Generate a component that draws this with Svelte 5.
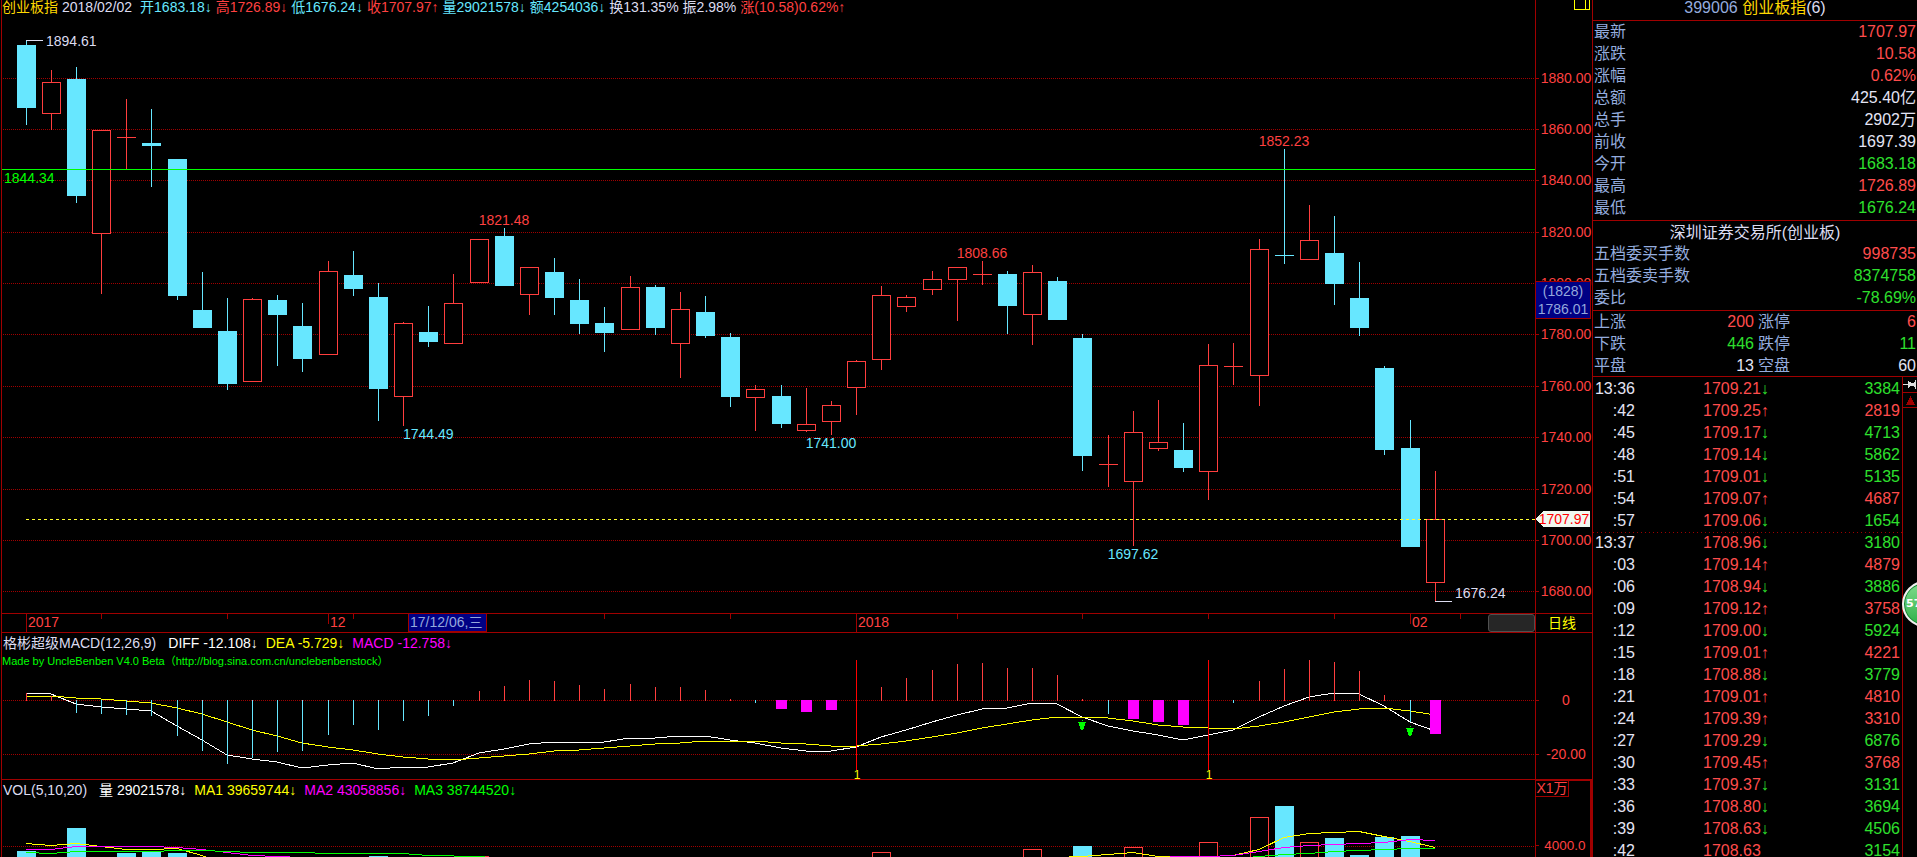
<script lang="ts">
	type Tone = 'up' | 'down' | 'plain';

	// first drawn column of the plots, right after the frame line
	const left = 2;
	let plotWidth = $state(1533);
	let step = $derived((plotWidth + left) / 61);
	let right = $derived(plotWidth + left);
	let cx = $derived((i: number) => Math.floor(26.1 + i * step));

	const header: [string, string][] = [
		['gold', '创业板指'],
		['pale date', '2018/02/02'],
		['cyan', '开1683.18↓'],
		['red', '高1726.89↓'],
		['cyan', '低1676.24↓'],
		['red', '收1707.97↑'],
		['cyan', '量29021578↓'],
		['cyan', '额4254036↓'],
		['pale', '换131.35%'],
		['pale', '振2.98%'],
		['red', '涨(10.58)0.62%↑']
	];

	const grid: [number, string][] = [
		[78, '1880.00'],
		[129, '1860.00'],
		[180, '1840.00'],
		[232, '1820.00'],
		[283, '1800.00'],
		[334, '1780.00'],
		[386, '1760.00'],
		[437, '1740.00'],
		[489, '1720.00'],
		[540, '1700.00'],
		[591, '1680.00']
	];

	// rising?, high, body top, body bottom, low
	const candles = [
		[0, 40, 45, 108, 125],
		[1, 70, 82, 114, 130],
		[0, 67, 79, 196, 203],
		[1, 130, 130, 234, 294],
		[1, 99, 137, 138, 169],
		[0, 109, 143, 146, 187],
		[0, 159, 159, 296, 300],
		[0, 272, 310, 328, 328],
		[0, 298, 331, 384, 390],
		[1, 298, 299, 382, 382],
		[0, 295, 300, 315, 366],
		[0, 303, 326, 359, 372],
		[1, 261, 271, 355, 355],
		[0, 251, 275, 289, 296],
		[0, 283, 297, 389, 421],
		[1, 322, 323, 397, 426],
		[0, 306, 332, 342, 347],
		[1, 274, 303, 344, 344],
		[1, 239, 239, 283, 283],
		[0, 228, 236, 286, 286],
		[1, 267, 267, 295, 315],
		[0, 258, 272, 298, 315],
		[0, 279, 300, 324, 334],
		[0, 307, 323, 333, 352],
		[1, 276, 287, 330, 330],
		[0, 285, 287, 328, 335],
		[1, 292, 309, 344, 378],
		[0, 296, 312, 336, 338],
		[0, 333, 337, 397, 407],
		[1, 385, 389, 398, 431],
		[0, 385, 396, 424, 428],
		[1, 388, 424, 431, 432],
		[1, 401, 405, 422, 435],
		[1, 360, 361, 388, 415],
		[1, 286, 295, 360, 370],
		[1, 295, 297, 307, 312],
		[1, 271, 279, 290, 295],
		[1, 267, 267, 280, 321],
		[1, 261, 274, 275, 285],
		[0, 271, 274, 306, 334],
		[1, 265, 272, 315, 345],
		[0, 277, 281, 320, 320],
		[0, 334, 338, 456, 471],
		[1, 435, 464, 465, 487],
		[1, 411, 432, 482, 546],
		[1, 400, 442, 449, 451],
		[0, 423, 450, 468, 472],
		[1, 344, 365, 472, 500],
		[1, 343, 366, 367, 385],
		[1, 239, 249, 376, 406],
		[0, 149, 255, 256, 264],
		[1, 205, 240, 260, 260],
		[0, 216, 253, 284, 305],
		[0, 262, 298, 328, 336],
		[0, 366, 368, 450, 455],
		[0, 420, 448, 547, 547],
		[1, 471, 519, 583, 601]
	];

	const marks: [number, number, number, string, string, string][] = [
		[0, 20, 46, 'start', 'pale', '1894.61'],
		[19, 0, 225, 'middle', 'red', '1821.48'],
		[15, 0, 439, 'start', 'cyan', '1744.49'],
		[32, 0, 448, 'middle', 'cyan', '1741.00'],
		[38, 0, 258, 'middle', 'red', '1808.66'],
		[50, 0, 146, 'middle', 'red', '1852.23'],
		[44, 0, 559, 'middle', 'cyan', '1697.62'],
		[56, 20, 598, 'start', 'pale', '1676.24']
	];

	const dayTicks = [3, 8, 13, 23, 28, 37, 42, 47, 52, 57];
	const monthTicks: [number, number, string][] = [
		[0, 18, '2017'],
		[12, 10, '12'],
		[33, 18, '2018'],
		[55, 10, '02']
	];

	const histogram = [
		693, 696, 713, 714, 715, 716, 736, 751, 764, 758, 752, 751, 735, 725, 730, 721, 716, 706, 691,
		686, 680, 681, 685, 689, 684, 687, 687, 690, 699, 703, 709, 712, 710, 700, 687, 678, 670, 664,
		663, 668, 668, 675, 699, 714, 719, 722, 725, 700, 703, 681, 669, 660, 662, 671, 695, 722, 734
	];
	const thick = [30, 31, 32, 44, 45, 46, 56];
	const crossings = [33, 47];
	const sellSignals: [number, number][] = [
		[42, 722],
		[55, 728]
	];

	const diff = [
		693, 694, 704, 707, 709, 711, 726, 740, 755, 759, 762, 768, 765, 763, 769, 767, 767, 763, 753,
		749, 744, 742, 742, 742, 738, 738, 736, 736, 740, 743, 748, 751, 751, 747, 737, 730, 722, 715,
		709, 708, 703, 704, 717, 726, 731, 735, 740, 735, 730, 717, 706, 697, 693, 694, 706, 722, 731
	];
	const dea = [
		696, 696, 698, 699, 701, 703, 708, 714, 722, 730, 736, 743, 747, 750, 754, 757, 759, 760, 758,
		756, 754, 751, 750, 748, 746, 744, 743, 741, 741, 741, 743, 744, 746, 746, 744, 741, 737, 733,
		728, 724, 720, 717, 717, 718, 721, 725, 727, 728, 729, 726, 722, 717, 712, 709, 708, 711, 715
	];

	// column, rising?, top
	const volumes = [
		[0, 0, 851],
		[2, 0, 828],
		[4, 0, 853],
		[5, 0, 851],
		[6, 0, 853],
		[14, 0, 856],
		[18, 1, 856],
		[34, 1, 852],
		[40, 1, 849],
		[42, 0, 846],
		[44, 1, 847],
		[47, 1, 842],
		[49, 1, 817],
		[50, 0, 806],
		[51, 1, 842],
		[52, 0, 838],
		[53, 0, 855],
		[54, 0, 837],
		[55, 0, 836]
	];
	const averages: [string, number[][]][] = [
		[
			'yellow',
			[
				[0, 843], [1, 845], [2, 843], [3, 846], [4, 849], [5, 849], [6, 848], [7, 855], [8, 866],
				[40, 866], [41, 857], [42, 856], [43, 854], [44, 852], [45, 856], [46, 856], [47, 856],
				[48, 855], [49, 849], [50, 837], [51, 833], [52, 832], [53, 831], [54, 836], [55, 841],
				[56, 847]
			]
		],
		[
			'magenta',
			[
				[0, 849], [1, 849], [2, 846], [5, 846], [6, 847], [7, 849], [8, 852], [9, 855], [10, 856],
				[11, 857], [12, 866], [44, 866], [45, 857], [46, 856], [47, 856], [48, 855], [49, 851],
				[50, 847], [51, 845], [52, 844], [53, 843], [54, 842], [55, 839], [56, 840]
			]
		],
		[
			'lime',
			[
				[0, 852], [1, 853], [2, 851], [5, 851], [6, 850], [7, 850], [8, 851], [9, 852], [11, 852],
				[12, 853], [15, 853], [16, 855], [18, 856], [20, 860], [47, 860], [49, 856], [50, 854],
				[51, 853], [52, 851], [53, 850], [54, 849], [55, 848], [56, 848]
			]
		]
	];

	function points(values: number[], x: (i: number) => number) {
		return values.map((y, i) => `${x(i)},${y}`).join(' ');
	}

	const quotes: [string, string, Tone][] = [
		['最新', '1707.97', 'up'],
		['涨跌', '10.58', 'up'],
		['涨幅', '0.62%', 'up'],
		['总额', '425.40亿', 'plain'],
		['总手', '2902万', 'plain'],
		['前收', '1697.39', 'plain'],
		['今开', '1683.18', 'down'],
		['最高', '1726.89', 'up'],
		['最低', '1676.24', 'down']
	];
	const orders: [string, string, Tone][] = [
		['五档委买手数', '998735', 'up'],
		['五档委卖手数', '8374758', 'down'],
		['委比', '-78.69%', 'down']
	];
	const breadth: [string, string, string, string, Tone][] = [
		['上涨', '200', '涨停', '6', 'up'],
		['下跌', '446', '跌停', '11', 'down'],
		['平盘', '13', '空盘', '60', 'plain']
	];
	const trades: [string, string, string, number, Tone][] = [
		['13:36', '1709.21', '↓', 3384, 'down'],
		[':42', '1709.25', '↑', 2819, 'up'],
		[':45', '1709.17', '↓', 4713, 'down'],
		[':48', '1709.14', '↓', 5862, 'down'],
		[':51', '1709.01', '↓', 5135, 'down'],
		[':54', '1709.07', '↑', 4687, 'up'],
		[':57', '1709.06', '↓', 1654, 'down'],
		['13:37', '1708.96', '↓', 3180, 'down'],
		[':03', '1709.14', '↑', 4879, 'up'],
		[':06', '1708.94', '↓', 3886, 'down'],
		[':09', '1709.12', '↑', 3758, 'up'],
		[':12', '1709.00', '↓', 5924, 'down'],
		[':15', '1709.01', '↑', 4221, 'up'],
		[':18', '1708.88', '↓', 3779, 'down'],
		[':21', '1709.01', '↑', 4810, 'up'],
		[':24', '1709.39', '↑', 3310, 'up'],
		[':27', '1709.29', '↓', 6876, 'down'],
		[':30', '1709.45', '↑', 3768, 'up'],
		[':33', '1709.37', '↓', 3131, 'down'],
		[':36', '1708.80', '↓', 3694, 'down'],
		[':39', '1708.63', '↓', 4506, 'down'],
		[':42', '1708.63', '', 3154, 'down']
	];
</script>

<div class="terminal">
	<main class="board">
		<section class="pane price">
			<div class="plot" bind:clientWidth={plotWidth}>
				<svg height="613" viewBox="{left} 0 {plotWidth} 613">
					{#each grid as [y]}
						<line class="grid" x1="3" x2={right} y1={y + 0.5} y2={y + 0.5} />
					{/each}
					{#each candles as [rising, high, top, bottom, low], i}
						{@const x = cx(i)}
						{#if rising}
							<rect class="fill-red" x={x} y={high} width="1" height={top - high} />
							<rect class="fill-red" x={x} y={bottom} width="1" height={low - bottom} />
							{#if bottom - top > 1}
								<rect
									class="hollow"
									x={x - 8.5}
									y={top + 0.5}
									width="18"
									height={bottom - top - 1}
								/>
							{:else}
								<rect class="fill-red" x={x - 9} y={top} width="19" height="1" />
							{/if}
						{:else}
							<rect class="fill-cyan" x={x} y={high} width="1" height={low - high} />
							<rect class="fill-cyan" x={x - 9} y={top} width="19" height={bottom - top} />
						{/if}
					{/each}
					<line class="lime" x1={left} x2={right} y1="169.5" y2="169.5" />
					<line class="last-price" x1="26" x2={right} y1="519.5" y2="519.5" />
					<path class="leader" d="M{cx(0)} 40.5h17M{cx(56)} 601.5h17" />
					<text class="text-lime" x="4" y="183">1844.34</text>
					{#each marks as [i, dx, y, anchor, tone, label]}
						<text class="text-{tone}" x={cx(i) + dx} {y} text-anchor={anchor}>{label}</text>
					{/each}
				</svg>
				<div class="legend header">
					{#each header as [tone, text]}
						<span class={tone}>{text}</span>
					{/each}
				</div>
			</div>
			<div class="axis">
				<svg height="613" viewBox="1536 0 56 613">
					<path class="split-icon" d="M1574.5 0V9.5H1589.5V0M1585.5 0V9" />
					{#each grid as [y, label]}
						<line class="tick" x1="1536" x2="1539" y1={y + 0.5} y2={y + 0.5} />
						<text class="text-axis" x="1566" y={y + 5} text-anchor="middle">{label}</text>
					{/each}
					<rect class="cursor-box" x="1535.5" y="281.5" width="55" height="37" />
					<text class="text-cursor" x="1563" y="296" text-anchor="middle">(1828)</text>
					<text class="text-cursor" x="1563" y="314" text-anchor="middle">1786.01</text>
					<path class="price-tag" d="M1536 519L1543 511H1590V527H1543Z" />
					<text class="text-tag" x="1564" y="524" text-anchor="middle">1707.97</text>
				</svg>
			</div>
		</section>

		<section class="pane dates">
			<div class="plot">
				<svg height="18" viewBox="{left} 614 {plotWidth} 18">
					{#each dayTicks as i}
						<rect class="fill-frame" x={cx(i)} y="614" width="1" height="5" />
					{/each}
					{#each monthTicks as [i, length, label]}
						<rect class="fill-frame" x={cx(i)} y="614" width="1" height={length} />
						<text class="text-axis" x={cx(i) + 2} y="627">{label}</text>
					{/each}
					<rect class="cursor-box" x={cx(15) + 5.5} y="613.5" width="78" height="18" />
					<text class="text-cursor" x={cx(15) + 7} y="627">17/12/06,三</text>
				</svg>
				<button class="thumb" aria-label="滚动"></button>
			</div>
			<div class="axis">
				<button class="period">日线</button>
			</div>
		</section>

		<section class="pane macd">
			<div class="plot">
				<svg height="146" viewBox="{left} 633 {plotWidth} 146">
					<line class="grid" x1="3" x2={right} y1="700.5" y2="700.5" />
					<line class="grid" x1="3" x2={right} y1="754.5" y2="754.5" />
					<polyline class="white" points={points(diff, cx)} />
					<polyline class="yellow" points={points(dea, cx)} />
					{#each histogram as y, i}
						{#if thick.includes(i)}
							<rect class="fill-magenta" x={cx(i) - 5} y="700" width="11" height={y - 700} />
						{:else if y > 700}
							<rect class="fill-cyan" x={cx(i)} y="700" width="1" height={y - 700} />
						{:else if y < 700}
							<rect class="fill-red" x={cx(i)} {y} width="1" height={701 - y} />
						{/if}
					{/each}
					{#each crossings as i}
						<rect class="crossing" x={cx(i)} y="660" width="1" height="110" />
						<text class="text-yellow count" x={cx(i) + 1} y="779" text-anchor="middle">1</text>
					{/each}
					{#each sellSignals as [i, y]}
						<path class="signal" d="M{cx(i) - 4} {y}h8l-3 8h-2zM{cx(i)} {y - 2}h1v1h-1z" />
					{/each}
				</svg>
				<div class="legend">
					<div class="line">
						<span class="pale">格彬超级MACD(12,26,9)</span>
						<span class="white-text">DIFF -12.108↓</span>
						<span class="yellow-text">DEA -5.729↓</span>
						<span class="magenta-text">MACD -12.758↓</span>
					</div>
					<div class="credit">Made by UncleBenben V4.0 Beta（http://blog.sina.com.cn/unclebenbenstock）</div>
				</div>
			</div>
			<div class="axis">
				<svg height="146" viewBox="1536 633 56 146">
					<path class="tick" d="M1536 700.5h3M1536 754.5h3" />
					<text class="text-axis" x="1566" y="705" text-anchor="middle">0</text>
					<text class="text-axis" x="1566" y="759" text-anchor="middle">-20.00</text>
				</svg>
			</div>
		</section>

		<section class="pane volume">
			<div class="plot">
				<svg height="77" viewBox="{left} 780 {plotWidth} 77">
					<line class="grid" x1="3" x2={right} y1="846.5" y2="846.5" />
					{#each volumes as [i, rising, top]}
						{#if rising}
							<rect class="hollow" x={cx(i) - 8.5} y={top + 0.5} width="18" height="80" />
						{:else}
							<rect class="fill-cyan" x={cx(i) - 9} y={top} width="19" height="80" />
						{/if}
					{/each}
					{#each averages as [tone, line]}
						<polyline class={tone} points={line.map(([i, y]) => `${cx(i)},${y + 0.5}`).join(' ')} />
					{/each}
				</svg>
				<div class="legend">
					<div class="line">
						<span class="pale">VOL(5,10,20)</span>
						<span class="white-text">量 29021578↓</span>
						<span class="yellow-text">MA1 39659744↓</span>
						<span class="magenta-text">MA2 43058856↓</span>
						<span class="lime-text">MA3 38744520↓</span>
					</div>
				</div>
			</div>
			<div class="axis selected">
				<span class="unit">X1万</span>
				<svg height="60" viewBox="1536 797 56 60">
					<path class="tick" d="M1536 846.5h3" />
					<text class="text-axis" x="1566" y="851" text-anchor="middle">4000.0</text>
				</svg>
			</div>
		</section>
	</main>

	<aside class="quote">
		<h1><span class="blue">399006</span> <span class="gold">创业板指</span><span class="pale">(6)</span></h1>

		<table class="facts">
			<tbody>
				{#each quotes as [label, value, tone]}
					<tr>
						<th scope="row">{label}</th>
						<td class={tone}>{value}</td>
					</tr>
				{/each}
			</tbody>
		</table>

		<div class="orders">
			<h2>深圳证券交易所(创业板)</h2>
			<table>
				<tbody>
					{#each orders as [label, value, tone]}
						<tr>
							<th scope="row">{label}</th>
							<td class={tone}>{value}</td>
						</tr>
					{/each}
				</tbody>
			</table>
		</div>

		<div class="breadth">
			<table>
				<tbody>
					{#each breadth as [label, count, limitLabel, limitCount, tone]}
						<tr>
							<th scope="row">{label}</th>
							<td class={tone}>{count}</td>
							<th class="limit">{limitLabel}</th>
							<td class={tone}>{limitCount}</td>
						</tr>
					{/each}
				</tbody>
			</table>
		</div>

		<div class="tape">
			<table class="trades">
				<tbody>
					{#each trades as [time, price, arrow, volume, tone], i}
						<tr class:minute={i > 0 && time.length > 3}>
							<td class="time">{time}</td>
							<td class="deal">{price}<span class={tone}>{arrow}</span></td>
							<td class={tone}>{volume}</td>
						</tr>
					{/each}
				</tbody>
			</table>
			<div class="scroller">
				<button aria-label="固定">
					<svg width="14" height="15" viewBox="0 0 14 15">
						<path d="M0 7.5H5M5.5 4V11M12.5 4V11M6 5L8 6.500H11L12 5V10L11 8.500H8L6 10Z" fill="#ddd" stroke="#ddd" />
					</svg>
				</button>
				<button aria-label="向上">
					<svg width="14" height="14" viewBox="0 0 14 14">
						<path d="M3 12L7.500 3L12 12Z" fill="#a00000" />
					</svg>
				</button>
			</div>
			<div class="ball">57</div>
		</div>
	</aside>
</div>

<style>
	:global(body) {
		background: #000;
	}

	.terminal {
		display: flex;
		height: 100vh;
		overflow: hidden;
		background: #000;
		font-family: 'Liberation Sans', 'Noto Sans CJK SC', sans-serif;
		font-size: 14px;
	}

	.board {
		flex: 1;
		min-width: 0;
		margin-left: 1px;
		border-left: 1px solid #a00000;
		display: flex;
		flex-direction: column;
	}

	.pane {
		display: flex;
	}
	.price,
	.dates,
	.macd {
		border-bottom: 1px solid #a00000;
	}
	.volume {
		flex: 1;
		min-height: 0;
	}

	.plot {
		flex: 1;
		min-width: 0;
		overflow: hidden;
		display: grid;
		grid-template-columns: 100%;
		align-items: start;
	}
	.plot > * {
		grid-area: 1 / 1;
	}
	.plot > svg {
		width: 100%;
	}

	.axis {
		width: 56px;
		border-left: 1px solid #a00000;
	}
	.axis > svg {
		width: 100%;
	}
	.axis.selected {
		box-sizing: border-box;
		width: 57px;
		border: 1px solid #a00000;
		border-right-width: 2px;
		border-bottom: 0;
	}

	svg {
		display: block;
		shape-rendering: crispEdges;
		fill: none;
	}

	.grid {
		stroke: #a00000;
		stroke-dasharray: 1 1;
	}
	.tick {
		stroke: #a00000;
	}
	.fill-red {
		fill: #ff3e3e;
	}
	.fill-cyan {
		fill: #67e7ff;
	}
	.fill-magenta {
		fill: #ff00ff;
	}
	.fill-frame {
		fill: #a00000;
	}
	.hollow {
		fill: #000;
		stroke: #ff3e3e;
	}
	.crossing {
		fill: #ff0000;
	}
	.signal {
		fill: #00ff00;
	}
	.lime {
		stroke: #00ff00;
	}
	.yellow {
		stroke: #ffff00;
	}
	.white {
		stroke: #fff;
	}
	.magenta {
		stroke: #ff00ff;
	}
	.last-price {
		stroke: #ffff30;
		stroke-dasharray: 3 3;
	}
	.leader {
		stroke: #dcdcf0;
	}
	.split-icon {
		stroke: #ffff00;
	}
	.cursor-box {
		fill: #000084;
		stroke: #a00000;
	}
	.price-tag {
		fill: #f0f8f0;
	}

	.text-red,
	.text-axis {
		fill: #ff4040;
	}
	.text-cyan {
		fill: #67e7ff;
	}
	.text-pale {
		fill: #dcdcf0;
	}
	.text-lime {
		fill: #00ff00;
	}
	.text-yellow {
		fill: #ffff00;
	}
	.text-cursor {
		fill: #94a8dc;
	}
	.text-tag {
		fill: #ff0000;
	}
	.count {
		font-size: 12px;
	}

	.legend {
		white-space: nowrap;
	}
	.header {
		display: flex;
		gap: 4px;
		line-height: 14px;
	}
	.date {
		margin-right: 4px;
	}
	.line {
		display: flex;
		gap: 8px;
		padding-left: 1px;
		line-height: 20px;
	}
	.line span:first-child {
		margin-right: 4px;
	}
	.credit {
		color: #00ff00;
		font-size: 11px;
		line-height: 16px;
	}

	.gold {
		color: #ffd800;
	}
	.pale {
		color: #dcdcf0;
	}
	.cyan {
		color: #67e7ff;
	}
	.red {
		color: #ff4040;
	}
	.blue {
		color: #94acde;
	}
	.white-text {
		color: #fff;
	}
	.yellow-text {
		color: #ffff00;
	}
	.magenta-text {
		color: #ff00ff;
	}
	.lime-text {
		color: #00ff00;
	}

	button {
		display: block;
		padding: 0;
		border: 0;
		background: none;
		font: inherit;
	}
	.thumb {
		justify-self: end;
		box-sizing: border-box;
		width: 47px;
		height: 18px;
		border: 1px solid #505050;
		border-radius: 3px;
		background: #262626;
	}
	.period {
		width: 100%;
		padding-right: 4px;
		color: #ffff00;
		line-height: 18px;
	}
	.unit {
		display: block;
		box-sizing: border-box;
		width: 33px;
		border: 1px solid #a00000;
		border-width: 0 1px 1px 0;
		color: #ff4040;
		line-height: 15px;
		text-align: center;
		white-space: nowrap;
	}

	.quote {
		width: 324px;
		border-left: 1px solid #a00000;
		font-size: 16px;
		line-height: 22px;
	}
	h1,
	h2 {
		margin: 0;
		font-size: 16px;
		font-weight: normal;
		text-align: center;
	}
	h1 {
		height: 20px;
		border-bottom: 1px solid #a00000;
		line-height: 16px;
	}
	h2 {
		height: 22px;
		color: #dcdcf0;
		line-height: 24px;
	}
	.facts,
	.orders {
		padding-bottom: 1px;
		border-bottom: 1px solid #a00000;
	}
	.breadth {
		box-sizing: border-box;
		height: 66px;
		border-bottom: 1px solid #a00000;
	}

	table {
		width: 100%;
		border-spacing: 0;
	}
	th,
	td {
		height: 22px;
		padding: 0 1px;
		text-align: right;
		white-space: nowrap;
	}
	th {
		color: #94acde;
		font-weight: normal;
		text-align: left;
	}
	.breadth table {
		table-layout: fixed;
	}
	.breadth .limit {
		padding-left: 3px;
	}

	.up {
		color: #ff4c4c;
	}
	.down {
		color: #2ee02e;
	}
	.plain {
		color: #e4e4f4;
	}

	.tape {
		position: relative;
		display: flex;
	}
	.trades {
		flex: 1;
		align-self: flex-start;
		margin-top: 1px;
		table-layout: fixed;
	}
	.trades td:last-child {
		padding-right: 2px;
	}
	.time {
		width: 41px;
		color: #e4e4f4;
	}
	.trades .deal {
		width: 140px;
		padding-left: 67px;
		box-sizing: border-box;
		color: #ff4c4c;
		text-align: left;
	}
	.minute {
		background: repeating-linear-gradient(90deg, #a00000 0 1px, #000 1px 4px) 0 0 / 100% 1px no-repeat;
	}
	.scroller {
		width: 14px;
		border-left: 1px solid #a00000;
	}
	.scroller button {
		border-bottom: 1px solid #a00000;
	}
	.ball {
		position: absolute;
		top: 204px;
		right: -31px;
		box-sizing: border-box;
		width: 46px;
		height: 46px;
		padding-left: 2px;
		border: 2px solid #f0f0f0;
		border-radius: 50%;
		background: linear-gradient(#7fdc8c, #2faf48);
		box-shadow: inset 0 0 0 1px #178033;
		color: #fff;
		font: bold 11px/42px 'DejaVu Sans', sans-serif;
	}
</style>
